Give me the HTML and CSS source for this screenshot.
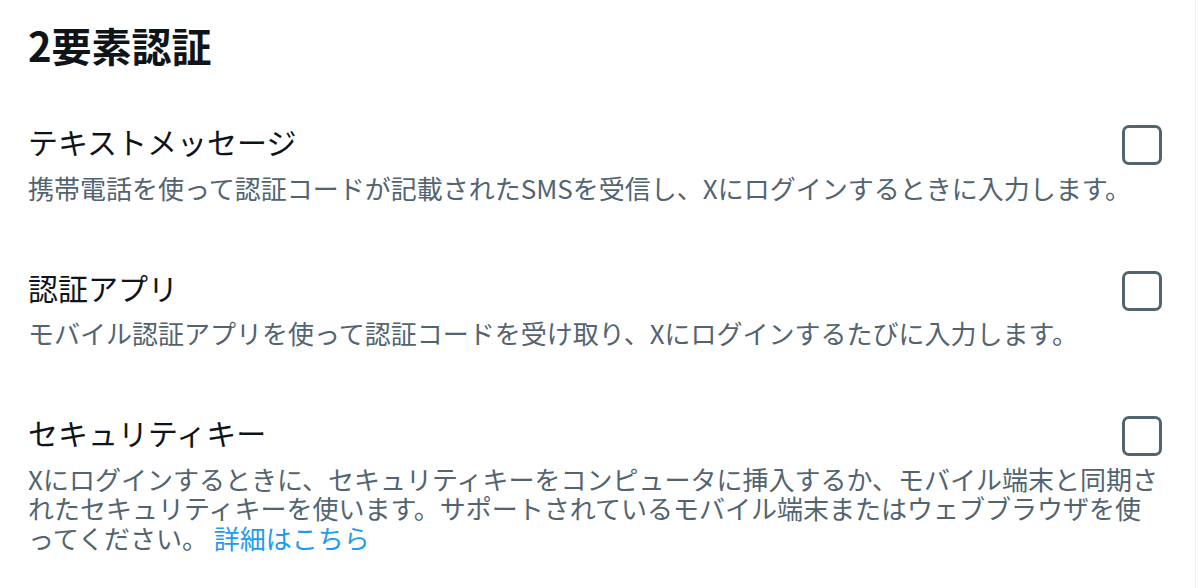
FILE: index.html
```html
<!DOCTYPE html>
<html lang="ja">
<head>
<meta charset="utf-8">
<title>2要素認証</title>
<link rel="stylesheet" href="styles.css">
</head>
<body>
<main class="page">
  <header class="section-head">
    <h1 class="section-title">2要素認証</h1>
  </header>

  <section class="option">
    <div class="option-head">
      <span class="option-title">テキストメッセージ</span>
      <span class="checkbox" role="checkbox" aria-checked="false"></span>
    </div>
    <p class="option-desc">携帯電話を使って認証コードが記載されたSMSを受信し、Xにログインするときに入力します。</p>
  </section>

  <section class="option">
    <div class="option-head">
      <span class="option-title">認証アプリ</span>
      <span class="checkbox" role="checkbox" aria-checked="false"></span>
    </div>
    <p class="option-desc">モバイル認証アプリを使って認証コードを受け取り、Xにログインするたびに入力します。</p>
  </section>

  <section class="option">
    <div class="option-head">
      <span class="option-title">セキュリティキー</span>
      <span class="checkbox" role="checkbox" aria-checked="false"></span>
    </div>
    <p class="option-desc">Xにログインするときに、セキュリティキーをコンピュータに挿入するか、モバイル端末と同期されたセキュリティキーを使います。サポートされているモバイル端末またはウェブブラウザを使ってください。 <a class="link" href="#">詳細はこちら</a></p>
  </section>
</main>
</body>
</html>
```

FILE: styles.css
```css
html, body {
  margin: 0;
  padding: 0;
  background: #ffffff;
}

body {
  font-family: "Noto Sans CJK JP", "Noto Sans", sans-serif;
  color: #0f1419;
  overflow: hidden;
}

.page {
  width: 1196px;
  min-height: 588px;
  box-sizing: border-box;
  border-right: 1px solid #eff3f4;
}

.section-head {
  padding: 21px 28px 20px 28px;
}

.section-title {
  margin: 0;
  font-size: 40px;
  line-height: 48px;
  font-weight: 700;
  color: #0f1419;
}

.option {
  padding: 32px 31px 32.5px 28px;
}

.option-head {
  display: flex;
  align-items: flex-start;
  justify-content: space-between;
}

.option-title {
  font-size: 30px;
  line-height: 40px;
  font-weight: 400;
  color: #0f1419;
}

.checkbox {
  flex: none;
  width: 40px;
  height: 40px;
  box-sizing: border-box;
  margin: 4px 2px -4px 0;
  border: 3px solid #536471;
  border-radius: 7px;
}

.option-desc {
  margin: 11.5px 0 0 0;
  font-size: 26px;
  line-height: 29.5px;
  color: #536471;
  line-break: loose;
}

.link {
  color: #1d9bf0;
  text-decoration: none;
}
```
